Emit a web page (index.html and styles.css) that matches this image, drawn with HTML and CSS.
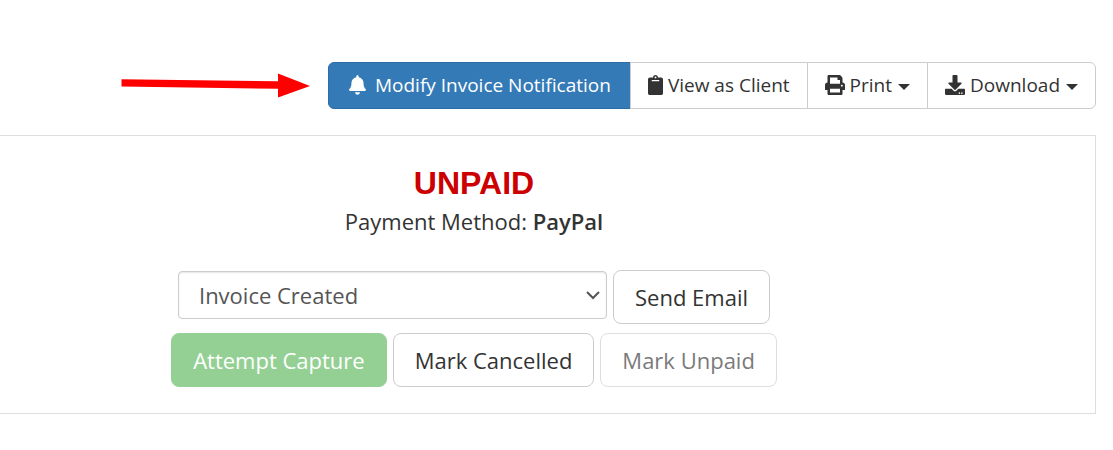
FILE: index.html
```
<!DOCTYPE html>
<html lang="en">
<head>
    <meta charset="UTF-8">
    <meta name="viewport" content="width=device-width, initial-scale=1.0">
    <title>Invoice</title>
    <link rel="stylesheet" href="styles.css">
</head>
<body>

<div class="toolbar">
    <svg class="arrow" viewBox="0 0 189 25" aria-hidden="true">
        <path fill="#f00" d="M0.5 6.2 157 8.2V0.5L189 13 157 24.5V15.8L0.5 13.6z"/>
    </svg>
    <div class="btn-group">
        <button type="button" class="btn btn-primary">
            <svg class="icon icon-bell" viewBox="0 0 448 512" aria-hidden="true"><path d="M224 512c35.3 0 64-28.700 64-64H160c0 35.300 28.700 64 64 64zm215.400-149.700c-19.300-20.800-55.500-52-55.500-154.300 0-77.700-54.500-139.900-127.900-155.200V32c0-17.700-14.300-32-32-32s-32 14.300-32 32v20.800C118.600 68.100 64.100 130.300 64.100 208c0 102.300-36.200 133.500-55.500 154.300-6 6.400-8.700 14.200-8.600 21.700.1 16.400 13 32 32.100 32h383.800c19.100 0 32-15.600 32.100-32 .1-7.500-2.600-15.300-8.600-21.700z"/></svg>
            Modify Invoice Notification
        </button>
        <button type="button" class="btn">
            <svg class="icon icon-clipboard" viewBox="0 0 384 512" aria-hidden="true"><path d="M384 112v352c0 26.500-21.500 48-48 48H48c-26.500 0-48-21.500-48-48V112c0-26.500 21.500-48 48-48h80c0-35.300 28.700-64 64-64s64 28.700 64 64h80c26.500 0 48 21.500 48 48zM192 40c-13.300 0-24 10.700-24 24s10.700 24 24 24 24-10.700 24-24-10.700-24-24-24m96 114v-20c0-3.300-2.700-6-6-6H102c-3.300 0-6 2.700-6 6v20c0 3.300 2.700 6 6 6h180c3.300 0 6-2.700 6-6z"/></svg>
            View as Client
        </button>
        <button type="button" class="btn">
            <svg class="icon" viewBox="0 0 512 512" aria-hidden="true"><path d="M448 192V77.300c0-8.500-3.400-16.600-9.400-22.600L393.400 9.400c-6-6-14.100-9.400-22.600-9.400H96C78.300 0 64 14.300 64 32v160c-35.300 0-64 28.700-64 64v112c0 8.800 7.200 16 16 16h48v96c0 17.700 14.300 32 32 32h320c17.700 0 32-14.300 32-32v-96h48c8.800 0 16-7.200 16-16V256c0-35.300-28.700-64-64-64zm-64 256H128v-96h256v96zm0-224H128V64h192v48c0 8.800 7.200 16 16 16h48v96zm48 72c-13.300 0-24-10.700-24-24s10.700-24 24-24 24 10.700 24 24-10.700 24-24 24z"/></svg>
            Print
            <span class="caret"></span>
        </button>
        <button type="button" class="btn">
            <svg class="icon" viewBox="0 0 512 512" aria-hidden="true"><path d="M216 0h80c13.300 0 24 10.700 24 24v168h87.700c17.800 0 26.700 21.500 14.100 34.100L269.700 378.300c-7.500 7.500-19.800 7.500-27.300 0L90.100 226.100c-12.600-12.600-3.700-34.100 14.100-34.100H192V24c0-13.300 10.700-24 24-24zm296 376v112c0 13.300-10.700 24-24 24H24c-13.300 0-24-10.700-24-24V376c0-13.300 10.700-24 24-24h146.700l49 49c20.100 20.100 52.500 20.100 72.600 0l49-49H488c13.300 0 24 10.700 24 24zm-124 88c0-11-9-20-20-20s-20 9-20 20 9 20 20 20 20-9 20-20zm64 0c0-11-9-20-20-20s-20 9-20 20 9 20 20 20 20-9 20-20z"/></svg>
            Download
            <span class="caret"></span>
        </button>
    </div>
</div>

<div class="panel">
    <div class="summary">
        <h1 class="status">UNPAID</h1>
        <p class="method">Payment Method: <strong>PayPal</strong></p>
        <form class="row row-email">
            <select class="select" aria-label="Email template">
                <option>Invoice Created</option>
            </select>
            <button type="button" class="btn btn-lg">Send Email</button>
        </form>
        <div class="row">
            <button type="button" class="btn btn-lg btn-success" disabled>Attempt Capture</button>
            <button type="button" class="btn btn-lg">Mark Cancelled</button>
            <button type="button" class="btn btn-lg" disabled>Mark Unpaid</button>
        </div>
    </div>
</div>

</body>
</html>
```
FILE: styles.css
```
* {
    box-sizing: border-box;
}

body {
    margin: 0;
    padding: 62px 17px 0 0;
    background-color: #fff;
    color: #333;
    font-family: "Open Sans", sans-serif;
    font-size: 22px;
}

/* Toolbar */
.toolbar {
    display: flex;
    justify-content: flex-end;
    align-items: center;
    gap: 18px;
    margin-bottom: 26px;
}

.arrow {
    width: 189px;
    height: 25px;
}

.btn-group {
    display: flex;
}

.btn {
    display: inline-flex;
    align-items: center;
    justify-content: center;
    gap: 5px;
    padding: 9px 17px;
    border: 1px solid #ccc;
    border-radius: 6px;
    background-color: #fff;
    color: #333;
    font-family: inherit;
    font-size: 19px;
    line-height: 27px;
    white-space: nowrap;
    cursor: pointer;
}

.btn-group .btn {
    border-radius: 0;
}

.btn-group .btn + .btn {
    margin-left: -1px;
}

.btn-group .btn:first-child {
    border-radius: 6px 0 0 6px;
}

.btn-group .btn:last-child {
    border-radius: 0 6px 6px 0;
}

.btn-group .btn-primary {
    gap: 9px;
    padding: 9px 19px 9px 20px;
    border-color: #2e6da4;
    background-color: #337ab7;
    color: #fff;
}

.icon {
    width: 20px;
    height: 20px;
    margin-bottom: 2px;
    fill: currentColor;
}

.icon-bell {
    width: 17px;
}

.icon-clipboard {
    width: 15px;
}

.caret {
    margin: 2px 0 0 1px;
    border-top: 6px solid;
    border-right: 6px solid transparent;
    border-left: 6px solid transparent;
}

/* Invoice summary */
.panel {
    padding: 24px 0 26px;
    border: 1px solid #ddd;
    border-left: 0;
}

.summary {
    margin-right: 147px;
    text-align: center;
}

.status {
    margin: 0;
    color: #c00;
    font-family: "Liberation Sans", Arial, sans-serif;
    font-size: 32px;
    font-weight: 700;
    line-height: 46px;
}

.method {
    margin: 0 0 34px;
    line-height: 30px;
}

.method strong {
    font-weight: 600;
}

.row {
    display: flex;
    justify-content: center;
    gap: 6px;
}

.row-email {
    margin-bottom: 9px;
}

.select {
    width: 429px;
    height: 48px;
    margin-top: 1px;
    padding: 0 44px 0 20px;
    border: 1px solid #ccc;
    border-radius: 4px;
    background: #fff url("data:image/svg+xml,%3Csvg xmlns='http://www.w3.org/2000/svg' viewBox='0 0 14 9'%3E%3Cpath d='M1 1l6 6 6-6' fill='none' stroke='%23555' stroke-width='2'/%3E%3C/svg%3E") no-repeat right 6px center / 14px 9px;
    box-shadow: inset 0 1px 2px rgba(0, 0, 0, 0.1);
    color: #555;
    font-family: inherit;
    font-size: 22px;
    appearance: none;
}

.btn-lg {
    padding: 10px 21px;
    border-radius: 8px;
    font-size: 22px;
    line-height: 32px;
}

.btn-success {
    border-color: #5cb85c;
    background-color: #5cb85c;
    color: #fff;
}

.btn:disabled {
    opacity: 0.65;
    cursor: not-allowed;
}
```
